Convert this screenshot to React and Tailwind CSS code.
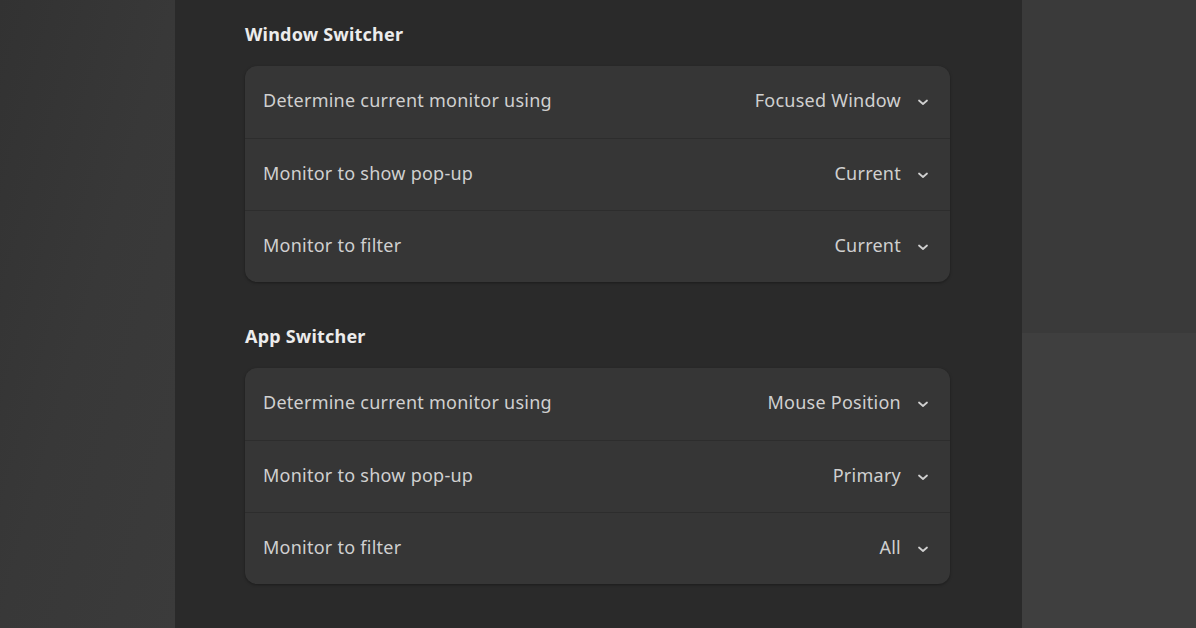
import React from "react";

const sections = [
  {
    title: "Window Switcher",
    rows: [
      { label: "Determine current monitor using", value: "Focused Window" },
      { label: "Monitor to show pop-up", value: "Current" },
      { label: "Monitor to filter", value: "Current" },
    ],
  },
  {
    title: "App Switcher",
    rows: [
      { label: "Determine current monitor using", value: "Mouse Position" },
      { label: "Monitor to show pop-up", value: "Primary" },
      { label: "Monitor to filter", value: "All" },
    ],
  },
];

function Chevron() {
  return (
    <svg width="12" height="12" viewBox="0 0 12 12" fill="none" className="text-[#cfcfcf]">
      <path d="M2 4.5 L6 8 L10 4.5" stroke="currentColor" strokeWidth="1.8" strokeLinecap="round" strokeLinejoin="round" />
    </svg>
  );
}

export default function App() {
  return (
    <div
      className="flex w-[1196px] h-[628px] overflow-hidden bg-[#3a3a3a] text-[#d0d0d0]"
      style={{ fontFamily: '"Noto Sans", "Open Sans", sans-serif' }}
    >
      {/* Wallpaper left */}
      <div className="w-[175px] h-full bg-gradient-to-br from-[#323232] via-[#383838] to-[#3b3b3b]" />

      {/* Settings panel */}
      <div className="w-[847px] h-full bg-[#2a2a2a] pl-[70px] pt-[22px] flex flex-col">
        {sections.map((s, i) => (
          <div key={s.title} className={i > 0 ? "mt-[42px]" : ""}>
            <h2 className="h-6 leading-6 text-[18px] tracking-[0.2px] font-bold text-[#ececec] mb-5">{s.title}</h2>
            <div className="w-[705px] rounded-xl bg-[#363636] shadow-[0_1px_3px_rgba(0,0,0,0.35)] overflow-hidden">
              {s.rows.map((r, j) => (
                <div
                  key={r.label}
                  className={
                    "h-[72px] flex items-center justify-between pl-[18px] pr-[21px] " +
                    (j > 0 ? "border-t border-[#2d2d2d]" : "")
                  }
                >
                  <span className="text-[18px] tracking-[0.25px] pb-[3px]">{r.label}</span>
                  <div className="flex items-center gap-4">
                    <span className="text-[18px] tracking-[0.25px] pb-[3px]">{r.value}</span>
                    <Chevron />
                  </div>
                </div>
              ))}
            </div>
          </div>
        ))}
      </div>

      {/* Wallpaper right */}
      <div className="w-[174px] h-full flex flex-col">
        <div className="h-[333px] bg-[#3a3a3a]" />
        <div className="flex-1 bg-[#3f3f3f]" />
      </div>
    </div>
  );
}
